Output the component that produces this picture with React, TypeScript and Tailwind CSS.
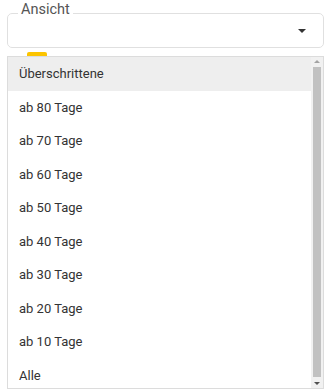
import React from "react";

const items = [
  "Überschrittene",
  "ab 80 Tage",
  "ab 70 Tage",
  "ab 60 Tage",
  "ab 50 Tage",
  "ab 40 Tage",
  "ab 30 Tage",
  "ab 20 Tage",
  "ab 10 Tage",
  "Alle",
];

export default function App() {
  return (
    <div className="w-[326px] h-[391px] bg-white pl-[7px] pr-[2px] pt-[5px] font-['Roboto',sans-serif] overflow-hidden">
      <div className="relative">
        <fieldset className="border border-[#e0e0e0] rounded-[5px] h-[43px] px-[10px] m-0">
          <legend className="px-[3px] text-[14.5px] leading-[16px] text-[#555]">
            <span className="relative -top-[3px]">Ansicht</span>
          </legend>
        </fieldset>
        <div className="absolute right-[18px] top-[24px] w-0 h-0 border-l-[4.5px] border-r-[4.5px] border-t-[4px] border-l-transparent border-r-transparent border-t-[#333]" />
      </div>
      <div className="ml-[20px] mt-[4px] w-[20px] h-[4px] bg-[#fcc400] rounded-t-[2px]" />
      <div className="h-[333px] border border-[#dcdcdc] flex overflow-hidden">
        <div className="flex-1 flex flex-col">
          {items.map((it, i) => (
            <div
              key={it}
              className={`h-[33.5px] shrink-0 flex items-center pl-[11px] text-[13px] text-[#333] ${i === 0 ? "bg-[#eeeeee]" : ""}`}
            >
              {it}
            </div>
          ))}
        </div>
        <div className="w-[12px] bg-[#f1f1f1] flex flex-col items-center">
          <div className="h-[9px] flex items-center justify-center">
            <div className="w-0 h-0 border-l-[3px] border-r-[3px] border-b-[3px] border-l-transparent border-r-transparent border-b-[#a3a3a3]" />
          </div>
          <div className="w-[8px] flex-1 bg-[#c1c1c1] mb-[12px] mt-[1px]" />
          <div className="h-[9px] flex items-center justify-center -mt-[10px]">
            <div className="w-0 h-0 border-l-[3px] border-r-[3px] border-t-[3px] border-l-transparent border-r-transparent border-t-[#505050]" />
          </div>
        </div>
      </div>
    </div>
  );
}
